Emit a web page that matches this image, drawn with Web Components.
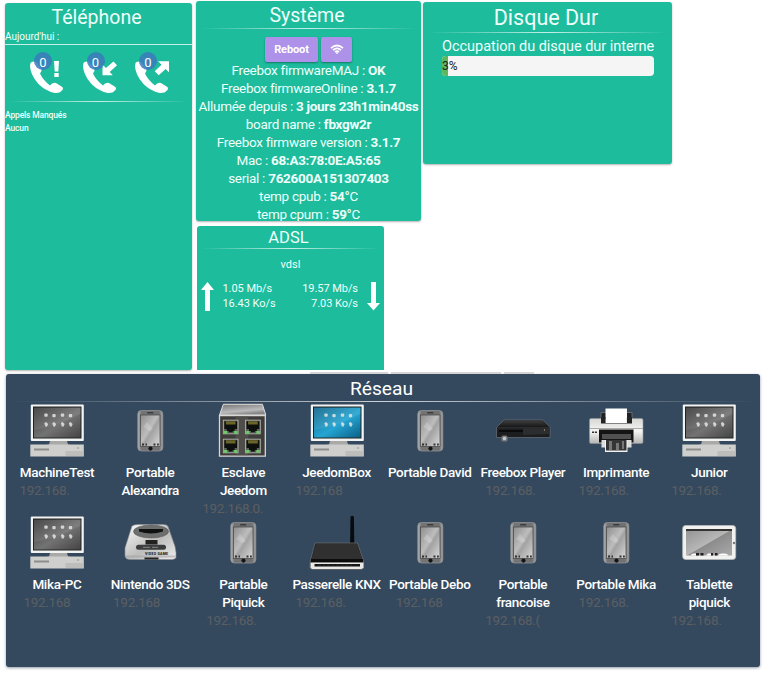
<!DOCTYPE html>
<html lang="fr">
<head>
<meta charset="utf-8">
<title>Freebox</title>
<style>
html,body{margin:0;background:#fff}
body{width:766px;height:674px;overflow:hidden;font-family:Roboto,"Open Sans",sans-serif;color:#effffb}
</style>
</head>
<body>
<free-dashboard></free-dashboard>
<script>
const define = (name, html, setup) => {
  const t = document.createElement('template');
  t.innerHTML = html;
  customElements.define(name, class extends HTMLElement {
    constructor() {
      super();
      this.attachShadow({mode: 'open'}).append(t.content.cloneNode(true));
    }
    connectedCallback() { if (setup) setup(this, this.shadowRoot); }
  });
};

/* Card with a centred title and a fading rule */
define('widget-card', `
<style>
:host{display:block;box-sizing:border-box;background:var(--bg,#1cbc9c);border-radius:3px;box-shadow:0 1px 2px rgba(0,0,0,.3);overflow:hidden}
header{height:var(--hh,28px);line-height:var(--hl,28px);font-size:var(--hs,18px);text-align:center;white-space:nowrap;padding-right:var(--hp,0)}
hr{margin:0 4px;border:0;height:1px;background:linear-gradient(90deg,transparent,rgba(255,255,255,.75) 50%,transparent)}
:host([plain]) hr{display:none}
</style>
<header><slot name="title"></slot></header><hr><slot></slot>`);

const ARROWS = {
  missed: '<path d="M24 11h5l-.7 10.500h-3.600zM24.300 23h4.400v4h-4.400z"/>',
  incoming: '<path d="M30.500 11.500l3.500 3.700-7.300 6.800 3.100 3.200H19.500V14.500l3.400 3.600z"/>',
  outgoing: '<path d="M34 11.300v11l-3.400-3.300-6.900 6.200-4-4 6.800-6.400-3.300-3.500z"/>'
};
define('call-counter', `
<style>
:host{display:block;position:relative;width:38px;height:46px}
svg{display:block;fill:#fff}
span{position:absolute;left:4px;top:2px;width:18px;height:18px;border-radius:50%;background:rgba(58,122,189,.86);font-size:13px;line-height:21px;text-align:center;color:#fff}
</style>
<svg width="38" height="46" viewBox="0 0 38 46"><path d="M.800 12.500Q3 11 6 11.500L11.500 19Q12 21 10 23.500Q13 30 20 35.500Q22.500 32 26 33L32 36.800Q34 38.300 32 40.500Q29.500 43.500 25 43C14 41 2.500 31 .200 18Q-.200 14.500.800 12.500z"/><g></g></svg><span><slot></slot></span>`,
(el, r) => { r.querySelector('g').innerHTML = ARROWS[el.getAttribute('kind')]; });

define('phone-widget', `
<style>
:host{display:block}
widget-card{height:367px;--hh:28px;--hl:30px;--hs:19.500px;--hp:4px}
.today{font-size:10px;letter-spacing:-.03px;line-height:12px;height:13px;border-bottom:1px solid rgba(255,255,255,.75)}
.calls{display:flex;gap:14.500px;padding:5px 0 0 25px;height:51px}
.sep{height:1px;margin:0 3px;background:linear-gradient(90deg,transparent,rgba(255,255,255,.75) 50%,transparent)}
.list{font-size:8.500px;letter-spacing:-.15px;font-weight:500;line-height:13px;padding:7px 0 0}
</style>
<widget-card plain><span slot="title">Téléphone</span>
<div class="today">Aujourd'hui :</div>
<div class="calls"><call-counter kind="missed">0</call-counter><call-counter kind="incoming">0</call-counter><call-counter kind="outgoing">0</call-counter></div>
<div class="sep"></div><div class="list"><div>Appels Manqués</div><div>Aucun</div></div></widget-card>`);

define('info-line', `
<style>:host{display:block;height:18px;line-height:18px;font-size:13.500px;letter-spacing:-.29px;text-align:center;white-space:nowrap}b{font-weight:700}</style>
<slot></slot> : <b></b><span></span>`, (el, r) => {
  r.querySelector('b').textContent = el.getAttribute('value');
  r.querySelector('span').textContent = el.getAttribute('unit') || '';
});

define('action-button', `
<style>:host{display:flex;align-items:center;justify-content:center;box-sizing:border-box;height:25px;background:#ae92ea;border-radius:2px;box-shadow:0 1px 2px rgba(0,0,0,.35);font-size:11px;letter-spacing:-.1px;font-weight:700;color:#fff}</style><slot></slot>`);

define('system-widget', `
<style>
:host{display:block}
widget-card{height:220px;--hh:27px;--hl:30px;--hs:19.500px;--hp:3px}
.buttons{display:flex;justify-content:center;gap:3px;height:24px;padding:8px 0 0}
.wide{width:53px}.small{width:31px}
</style>
<widget-card><span slot="title">Système</span>
<div class="buttons"><action-button class="wide">Reboot</action-button><action-button class="small"><svg width="14" height="11" viewBox="0 0 14 11" fill="none" stroke="#fff" stroke-width="1.700"><path d="M1 4.200Q7-1.200 13 4.200M3 6.200Q7 2.600 11 6.200M5 8Q7 6.300 9 8"/><circle cx="7" cy="9" r=".6" fill="#fff" stroke="#fff" stroke-width=".8"/></svg></action-button></div>
<info-line value="OK">Freebox firmwareMAJ</info-line>
<info-line value="3.1.7">Freebox firmwareOnline</info-line>
<info-line value="3 jours 23h1min40ss">Allumée depuis</info-line>
<info-line value="fbxgw2r">board name</info-line>
<info-line value="3.1.7">Freebox firmware version</info-line>
<info-line value="68:A3:78:0E:A5:65">Mac</info-line>
<info-line value="762600A151307403">serial</info-line>
<info-line value="54°" unit="C">temp cpub</info-line>
<info-line value="59°" unit="C">temp cpum</info-line>
</widget-card>`);

define('adsl-widget', `
<style>
:host{display:block}
widget-card{height:144px;--hh:22px;--hl:23px;--hs:16.500px;--hp:4px;border-radius:3px 3px 0 0;box-shadow:none}
.mode{font-size:11px;line-height:14px;text-align:center;padding-top:9px}
.rates{display:flex;justify-content:space-between;align-items:center;height:32px;padding:8px 4px 0;font-size:11px;line-height:15px;letter-spacing:-.06px}
.up{flex:1;padding-left:8.500px}.down{text-align:right;padding-right:9px}
svg{display:block;fill:#fff}
</style>
<widget-card><span slot="title">ADSL</span>
<div class="mode">vdsl</div>
<div class="rates"><svg width="13" height="29" viewBox="0 0 13 29"><path d="M6.500 0L13 8H9v21H4V8H0z"/></svg>
<div class="up"><div>1.05 Mb/s</div><div>16.43 Ko/s</div></div><div class="down"><div>19.57 Mb/s</div><div>7.03 Ko/s</div></div>
<svg width="13" height="29" viewBox="0 0 13 29"><path d="M4 0h5v21h4l-6.500 7.500L0 21h4z"/></svg></div></widget-card>`);

define('disk-widget', `
<style>
:host{display:block}
widget-card{height:162px;--hh:30px;--hl:32px;--hs:21.500px;--hp:3px}
.disk{width:212px;margin:5px auto 0 19px;font-size:14.500px;letter-spacing:-.03px;line-height:18px;white-space:nowrap}
.bar{height:20px;background:#f5f5f5;border-radius:4px;overflow:hidden}
.fill{width:3%;height:20px;background:#5cb85c;color:#222;font-size:12px;line-height:21px}
</style>
<widget-card><span slot="title">Disque Dur</span><div class="disk"><div>Occupation du disque dur interne</div><div class="bar"><div class="fill">3%</div></div></div></widget-card>`);

/* Device pictures, each on a 56 by 56 canvas */
const apps = [16,24,32.500,40.500].map((x, i) => `<rect x="${x-1.700}" y="${10.500+i%2*.4}" width="3.400" height="3.300" rx="1"/><path d="M${x-1.700} ${20}l1.800-1 2 2-1.200 2.700-1.700-.5z"/>`).join('');
const pc = (a, b, c) => `
<linearGradient id="s" x2="1" y2="1"><stop stop-color="${a}"/><stop offset=".55" stop-color="${b}"/><stop offset="1" stop-color="${c}"/></linearGradient>
<path d="M20 38h17l1 3.500 7 1.500H11l8-1.500z" fill="#a9a9a7"/>
<rect x=".800" y="1.500" width="53" height="36.500" rx="1" fill="#f2f4f4"/><rect x="3" y="3.500" width="48.500" height="32" fill="#222"/><rect x="4" y="4.500" width="46.500" height="30" fill="url(#s)"/>
<path d="M4 27Q25 24 50.500 11V5H4z" fill="#fff" opacity=".08"/><g fill="#e4e6e4" opacity=".85">${apps}</g>
<path d="M.300 41.500h53.500v12H.300z" fill="#cfd0ce"/><path d="M35.500 48h18v5h-18z" fill="#bdbebc"/><path d="M4 45.500h15v2H4z" fill="#8d8e8c"/><circle cx="48" cy="45" r=".8" fill="#888"/>`;
const phone = `
<linearGradient id="b" x2="1"><stop stop-color="#b5b6b8"/><stop offset=".15" stop-color="#737476"/><stop offset=".85" stop-color="#707173"/><stop offset="1" stop-color="#a9aaac"/></linearGradient>
<linearGradient id="s" x2="1" y2="1"><stop stop-color="#8e8e8e"/><stop offset=".45" stop-color="#bdbdbd"/><stop offset=".55" stop-color="#a2a2a2"/><stop offset="1" stop-color="#dadada"/></linearGradient>
<rect x="14.800" y="7.500" width="25" height="40.500" rx="3.500" fill="url(#b)" stroke="#8f9092" stroke-width=".8"/>
<rect x="17.500" y="12" width="19.500" height="31.500" fill="url(#s)" stroke="#444" stroke-width=".7"/>
<rect x="24" y="9" width="6.500" height="1.500" rx=".7" fill="#3c3c3c"/><circle cx="27.500" cy="45.600" r="2.100" fill="#141414"/>
<path d="M19 40.500h2v2h-2zM22.500 40.500h1.500v2h-1.500zM30.500 40.500h2v2h-2zM34 40.500h1.800v2H34z" fill="#333"/><path d="M20 24l4-5 6 7-3 2zM28 19l6-4" fill="#fff" opacity=".2"/>`;
const port = (x, y) => `<g transform="translate(${x} ${y})"><path d="M0 0h16v15H0z" fill="#b9bab4"/><path d="M.800.800h14.400v13.400H.800z" fill="#5c605a"/><path d="M1.500 1.500h13v8h-2.500v2H10v1.500H6v-1.500H4v-2H1.500z" fill="#0d100d"/><path d="M3 1.500h10v3.500H3z" fill="#6a6528"/><path d="M1 11.500h3.500v3H1zM11.500 11.500H15v3h-3.500z" fill="#6ccb6a"/></g>`;
const PICS = {
  pc: pc('#3a3a3a', '#737373', '#444'),
  jeedom: pc('#12658a', '#25a5d2', '#0b6087'),
  phone,
  hub: `<linearGradient id="s" y2="1" x2=".4"><stop stop-color="#747474"/><stop offset=".7" stop-color="#bbb"/><stop offset="1" stop-color="#858585"/></linearGradient>
<g transform="translate(3 .600) scale(.975)"><path d="M4.500.700h40l3.500 11H.500z" fill="url(#s)" stroke="#e4e4e2" stroke-width="1"/><path d="M.500 12.300H47.500v41.500H.500z" fill="#3e3d3a" stroke="#d8d8d6" stroke-width="1.300"/><path d="M17 13h13v40H17z" fill="#5a5854" opacity=".6"/>${port(4,16.500)}${port(26.800,16.500)}${port(4,36)}${port(26.800,36)}</g>`,
  player: `<linearGradient id="s" x2="0" y2="1"><stop stop-color="#3d3d3d"/><stop offset="1" stop-color="#141414"/></linearGradient>
<path d="M8 17H47L54 24.500V34.500H.500V24.500z" fill="#1c1d1e" stroke="#777a7e" stroke-width=".6"/><path d="M8.500 17.500h38l7 7H1z" fill="url(#s)"/><path d="M1 24.800h52.500" stroke="#555" stroke-width=".5"/><path d="M3 28h24" stroke="#050505" stroke-width="1.500"/><path d="M27 25.200h26.500V31L27 32z" fill="#2c2d2e"/><circle cx="48.500" cy="27" r=".7" fill="#aa9f88"/><rect x="5.500" y="32.500" width="6" height="6" rx="1.500" fill="#77797c"/><circle cx="8.500" cy="35.500" r="1.800" fill="#c6c7c8"/>`,
  printer: `<linearGradient id="s" y2="1" x2="0"><stop stop-color="#d5d5d4"/><stop offset=".5" stop-color="#f6f6f4"/><stop offset="1" stop-color="#b5b5b4"/></linearGradient>
<path d="M12 9.500h31V21H12z" fill="#1f2022" stroke="#777" stroke-width=".8"/><path d="M16.500 5.500h21.500v15H16.500z" fill="#fff"/>
<rect x=".500" y="15.500" width="53.500" height="25" rx="1.500" fill="url(#s)" stroke="#8f9294" stroke-width=".6"/><path d="M12 14h4.500v6H38v-6h5v6.500H12z" fill="#242424"/><path d="M17 14.500h20.500V20H17z" fill="#fff"/><path d="M1 25h53v1H1z" fill="#aaa"/><path d="M10 26.500h34.500v13H10z" fill="#141414"/><path d="M13 31h29v5H13z" fill="#505050"/><path d="M12.500 37h30v7.500h-30z" fill="#ddd"/><path d="M16 37h22.500v12H16z" fill="#f2f2f2"/><path d="M17 37h20.500v10.500H17z" fill="#353535"/><path d="M20 38h3v9h-3zM27 40h3v7h-3zM33 38h2v8h-2z" fill="#888" opacity=".8"/><path d="M3 28.500h2.200v1.500H3zM6 28.500h2v1.500H6z" fill="#333"/>`,
  game: `<linearGradient id="s" x2="1" y2="1"><stop stop-color="#fafafa"/><stop offset=".55" stop-color="#bdbdbc"/><stop offset="1" stop-color="#eee"/></linearGradient>
<path d="M9 11Q11 9.500 15 9.500h25q4 0 5 2l7 20 1 6v5Q52 44.500 49 44.500H7q-4.500 0-5-3.500V33z" fill="url(#s)" stroke="#898c90" stroke-width=".6"/>
<ellipse cx="28" cy="16.500" rx="17.500" ry="6.500" fill="#6d6e6e" stroke="#555" stroke-width=".6"/><path d="M16 14h24v2.500q-12 4-24 0z" fill="#111"/><path d="M22.500 25h12v4.500h-12z" fill="#222"/><rect x="13" y="29.800" width="30" height="5" rx="2.500" fill="#3b3c3d"/><path d="M20 32.300h7M29 32.300h6" stroke="#999" stroke-width=".8"/><text x="22" y="39.500" font-size="3.500" font-weight="900" textLength="23" fill="#222">VIDEO GAME</text><path d="M2.500 40.500h50v2H2.500z" fill="#999" opacity=".5"/><path d="M21.500 42.500h14v2h-14z" fill="#222"/>`,
  router: `<path d="M40.500 2q1.700-2.300 3.400 0l.4 28h-4.200z" fill="#080a0d"/><path d="M5 28h42.500l6 18v7L52 54.500H2L0 53v-6z" fill="#222" stroke="#686b6e" stroke-width=".8"/><path d="M6 29h41l5 15H1.500z" fill="#303030"/><path d="M1 44h52v3H1z" fill="#0c0c0c"/><path d="M.500 47.500h53v5.500l-2 1H2l-1.500-1z" fill="#e8e8e6"/><path d="M4.500 49h45.500v2.500H4.500z" fill="#151515"/><path d="M8 50.200h36" stroke="#333" stroke-width=".7" stroke-dasharray="3 1.500"/>`,
  tablet: `<linearGradient id="s" x2="1" y2="1"><stop stop-color="#929292"/><stop offset=".5" stop-color="#b7b7b7"/><stop offset=".52" stop-color="#8c8c8c"/><stop offset="1" stop-color="#a9a9a9"/></linearGradient>
<rect x=".700" y="10.500" width="53" height="34" rx="3" fill="#f1f1f0" stroke="#b8babc" stroke-width=".8"/><path d="M4 14h46v26.500H4z" fill="url(#s)"/><path d="M4 14h46v2H4z" fill="#333"/><path d="M9 40.500q0-2 3-2h2v2zM24 40.500l2-2h3v2zM36 40.500q1-2.500 6-2 4 0 4 2z" fill="#fff"/><path d="M14 38h3v2.500h-3zM18.500 38h3v2.500h-3zM29 38h2v2.500h-2zM33 38h2.500v2.500H33z" fill="#222"/><circle cx="52" cy="28" r="1.200" fill="#777"/>`
};
define('device-tile', `
<style>
:host{display:block;height:112px}
svg{display:block;margin:0 auto;width:56px;height:56px}
.name{font-size:13.500px;font-weight:500;letter-spacing:-.34px;line-height:18px;color:#fff;text-align:center;margin:4px 0 0;white-space:pre}
.ip{font-size:13.500px;letter-spacing:-.3px;line-height:18px;color:#5c5f62;white-space:nowrap;height:18px;margin-left:var(--x)}
</style>
<svg viewBox="-1 0 56 56"></svg><div class="name"></div><div class="ip"></div>`, (el, r) => {
  const d = el.data;
  r.querySelector('svg').innerHTML = PICS[d[0]];
  r.querySelector('.name').textContent = d[1];
  const ip = r.querySelector('.ip');
  ip.textContent = d[2];
  ip.style.setProperty('--x', d[3] + 'px');
});

const DEVICES = [
  ['pc','MachineTest','192.168.',9], ['phone','Portable\nAlexandra','',0], ['hub','Esclave\nJeedom','192.168.0.',5.500], ['jeedom','JeedomBox','192.168',5.500],
  ['phone','Portable David','',0], ['player','Freebox Player','192.168.',9], ['printer','Imprimante','192.168.',9], ['pc','Junior','192.168.',8.500],
  ['pc','Mika-PC','192.168',13], ['game','Nintendo 3DS','192.168',9.500], ['phone','Partable\nPiquick','192.168.',9.500], ['router','Passerelle KNX','192.168.',5.500],
  ['phone','Portable Debo','192.168',12.500], ['phone','Portable\nfrancoise','192.168.(',9], ['phone','Portable Mika','192.168.',9], ['tablet','Tablette\npiquick','192.168.',8.500]
];
define('network-widget', `
<style>
:host{display:block}
widget-card{height:293px;--bg:#34495e;--hh:27px;--hl:29px;--hs:19.200px;--hp:3px;color:#fff;box-shadow:0 1px 3px rgba(52,73,94,.55)}
.grid{display:grid;grid-template-columns:repeat(8,93.200px);padding:1px 0 0 4.400px}
</style>
<widget-card><span slot="title">Réseau</span><div class="grid"></div></widget-card>`, (el, r) => {
  const g = r.querySelector('.grid');
  for (const d of DEVICES) {
    const t = document.createElement('device-tile');
    t.data = d;
    g.append(t);
  }
});

define('free-dashboard', `
<style>
:host{display:block;width:766px;height:674px;overflow:hidden}
.top{display:grid;grid-template-columns:187px 225px 247px;column-gap:4px;padding-left:5px;height:370px;align-items:start}
phone-widget{margin-top:3px}
.mid{padding-top:1px}
adsl-widget{width:187px;margin:5px 0 0 1px}
disk-widget{margin:2px 0 0 -2px}
.edge{display:flex;gap:3px;height:2px;padding:2px 0 0 310px}
.edge i{height:2px;background:#d2d4d6}
network-widget{margin:0 6px}
</style>
<div class="top"><phone-widget></phone-widget><div class="mid"><system-widget></system-widget><adsl-widget></adsl-widget></div><disk-widget></disk-widget></div>
<div class="edge"><i style="width:78px"></i><i style="width:110px"></i><i style="width:30px"></i></div>
<network-widget></network-widget>`);
</script>
</body>
</html>
